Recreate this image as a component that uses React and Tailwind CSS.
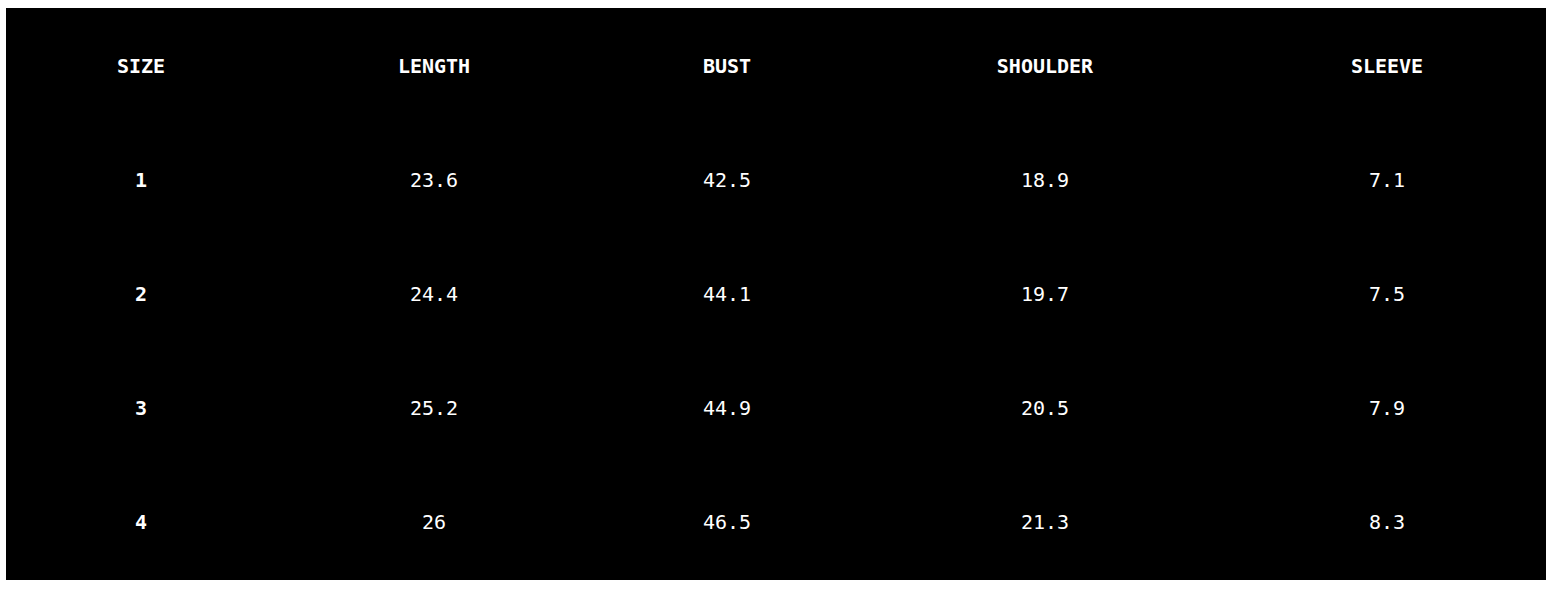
const columns = [
  { label: 'SIZE', width: 'w-[270px]' },
  { label: 'LENGTH', width: 'w-[316px]' },
  { label: 'BUST', width: 'w-[270px]' },
  { label: 'SHOULDER', width: 'w-[366px]' },
  { label: 'SLEEVE', width: 'w-[318px]' },
]

const rows = [
  ['1', '23.6', '42.5', '18.9', '7.1'],
  ['2', '24.4', '44.1', '19.7', '7.5'],
  ['3', '25.2', '44.9', '20.5', '7.9'],
  ['4', '26', '46.5', '21.3', '8.3'],
]

export default function App() {
  return (
    <div className="min-h-screen bg-white pt-2 pl-[6px]">
      <div
        className="w-[1540px] bg-black pb-px text-white text-[20px]"
        style={{ fontFamily: "'DejaVu Sans Mono', 'Liberation Mono', monospace" }}
      >
        {/* Header */}
        <div className="flex h-[115px] items-center">
          {columns.map(col => (
            <div key={col.label} className={`${col.width} text-center font-bold`}>
              {col.label}
            </div>
          ))}
        </div>

        {/* Body */}
        {rows.map(row => (
          <div key={row[0]} className="flex h-[114px] items-center">
            {row.map((cell, i) => (
              <div
                key={i}
                className={`${columns[i].width} text-center ${i === 0 ? 'font-bold' : 'font-normal'}`}
              >
                {cell}
              </div>
            ))}
          </div>
        ))}
      </div>
    </div>
  )
}
